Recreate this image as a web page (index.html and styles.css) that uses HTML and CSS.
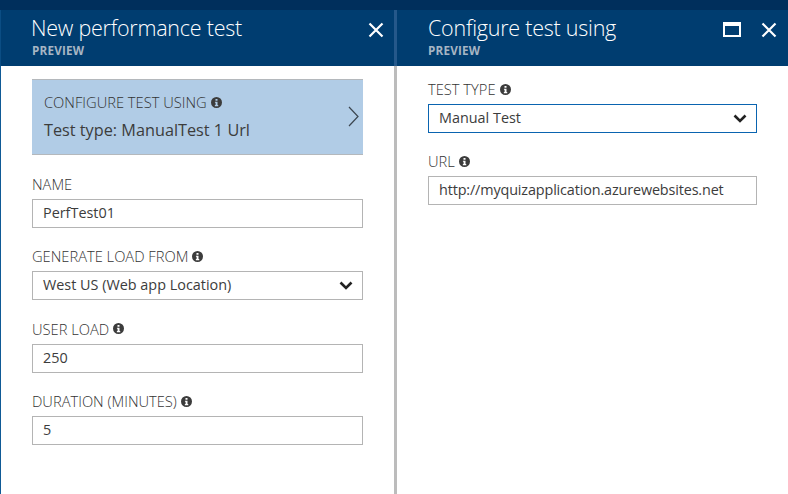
FILE: index.html
```html
<!DOCTYPE html>
<html lang="en">
<head>
<meta charset="utf-8">
<title>New performance test</title>
<link rel="stylesheet" href="styles.css">
</head>
<body>
<div class="topbar"></div>
<main class="blades">
  <section class="blade blade-left">
    <header class="blade-head">
      <div class="titles">
        <h1>New performance test</h1>
        <div class="sub">PREVIEW</div>
      </div>
      <div class="actions">
        <svg class="ico-close" width="16" height="16" viewBox="0 0 16 16"><path d="M1.5 1.5L14.5 14.5M14.5 1.5L1.5 14.5" fill="none" stroke="#fff" stroke-width="2.2"/></svg>
      </div>
    </header>
    <div class="blade-body">
      <div class="selector">
        <div class="selector-text">
          <div class="label">CONFIGURE TEST USING <svg class="info" viewBox="0 0 12 12"><use href="#i"/></svg></div>
          <div class="selector-value">Test type: ManualTest 1 Url</div>
        </div>
        <svg class="chev" width="11" height="21" viewBox="0 0 11 21"><path d="M1 1L10 10.5L1 20" fill="none" stroke="#3c4650" stroke-width="1.2"/></svg>
      </div>
      <div class="field">
        <div class="label">NAME</div>
        <div class="box">PerfTest01</div>
      </div>
      <div class="field">
        <div class="label">GENERATE LOAD FROM <svg class="info" viewBox="0 0 12 12"><use href="#i"/></svg></div>
        <div class="box box-select"><span>West US (Web app Location)</span><svg class="caret" width="14" height="9" viewBox="0 0 14 9"><path d="M1.5 1.5L7 7L12.5 1.5" fill="none" stroke="#222" stroke-width="2.6"/></svg></div>
      </div>
      <div class="field">
        <div class="label">USER LOAD <svg class="info" viewBox="0 0 12 12"><use href="#i"/></svg></div>
        <div class="box">250</div>
      </div>
      <div class="field">
        <div class="label">DURATION (MINUTES) <svg class="info" viewBox="0 0 12 12"><use href="#i"/></svg></div>
        <div class="box">5</div>
      </div>
    </div>
  </section>
  <section class="blade blade-right">
    <header class="blade-head">
      <div class="titles">
        <h1>Configure test using</h1>
        <div class="sub">PREVIEW</div>
      </div>
      <div class="actions">
        <svg class="ico-max" width="18" height="15" viewBox="0 0 18 15"><path d="M0 0H18V15H0ZM2 4V13H16V4Z" fill="#fff" fill-rule="evenodd"/></svg>
        <svg class="ico-close" width="16" height="16" viewBox="0 0 16 16"><path d="M1.5 1.5L14.5 14.5M14.5 1.5L1.5 14.5" fill="none" stroke="#fff" stroke-width="2.2"/></svg>
      </div>
    </header>
    <div class="blade-body">
      <div class="field">
        <div class="label">TEST TYPE <svg class="info" viewBox="0 0 12 12"><use href="#i"/></svg></div>
        <div class="box box-select box-focus"><span>Manual Test</span><svg class="caret" width="14" height="9" viewBox="0 0 14 9"><path d="M1.5 1.5L7 7L12.5 1.5" fill="none" stroke="#222" stroke-width="2.6"/></svg></div>
      </div>
      <div class="field">
        <div class="label">URL <svg class="info" viewBox="0 0 12 12"><use href="#i"/></svg></div>
        <div class="box box-url">http://myquizapplication.azurewebsites.net</div>
      </div>
    </div>
  </section>
</main>
<svg class="defs" width="0" height="0">
  <symbol id="i" viewBox="0 0 12 12">
    <path fill="#3c3c3c" fill-rule="evenodd" d="M6 0a6 6 0 1 0 0 12a6 6 0 0 0 0-12ZM4.9 2.2H7.1V4.2H4.9ZM4.3 5.2H7.1V8.8H7.9V10H4.2V8.8H5V6.4H4.3Z"/>
  </symbol>
</svg>
</body>
</html>
```
FILE: styles.css
```css
* { box-sizing: border-box; }
html, body { margin: 0; padding: 0; height: 100%; }
body {
  width: 788px;
  height: 494px;
  overflow: hidden;
  background: #fff;
  font-family: "Open Sans", "Noto Sans", sans-serif;
  color: #3c3c3c;
  display: flex;
  flex-direction: column;
}
.topbar { height: 10px; background: #002f5c; flex: none; }
.blades { flex: 1; display: flex; min-height: 0; }
.blade { display: flex; flex-direction: column; }
.blade-left { width: 397px; flex: none; }
.blade-right { flex: 1; }
.blade-head {
  height: 56px;
  background: #003d70;
  display: flex;
  justify-content: space-between;
  flex: none;
}
.blade-left .blade-head {
  padding: 0 10px 0 31px;
  border-left: 1px solid #0b4d83;
  border-right: 3px solid #25588a;
}
.blade-right .blade-head { padding: 0 11px 0 31px; }
h1 {
  margin: 3px 0 0;
  font-size: 21.5px;
  letter-spacing: -0.24px;
  line-height: 30px;
  font-weight: 300;
  color: #fff;
  white-space: nowrap;
}
.blade-left h1 { margin-left: -1px; }
.sub {
  font-size: 11.7px;
  letter-spacing: 0.2px;
  line-height: 14px;
  font-weight: 700;
  color: #a6b5c4;
}
.actions { display: flex; align-items: flex-start; gap: 20px; padding-top: 12px; }
.blade-body { padding: 13px 31px 0; flex: 1; }
.blade-left .blade-body { border-left: 1px solid #0f5a96; border-right: 3px solid #bcbcbc; }
.blade-right .blade-body { padding: 14px 31px 0; }
.selector {
  height: 76px;
  background: #b1cce6;
  border-top: 1px solid #b4b8bc;
  border-bottom: 1px solid #b4b8bc;
  display: flex;
  align-items: center;
  justify-content: space-between;
  padding: 0 4px 0 12px;
  margin-bottom: 20px;
}
.selector-text { margin-top: -1px; }
.selector-text .label { margin-bottom: 9px; }
.selector-value { font-size: 16.25px; line-height: 20px; color: #3c3c3c; }
.chev { margin-top: -2px; }
.label {
  font-size: 14.7px;
  line-height: 18px;
  font-weight: 300;
  color: #333;
  display: flex;
  align-items: center;
  gap: 4px;
  white-space: nowrap;
}
.info { width: 11px; height: 11px; flex: none; }
.field { margin-bottom: 19.4px; }
.field .label { margin-bottom: 6px; }
.box {
  height: 29px;
  border: 1px solid #b4b4b4;
  padding: 0 10px;
  font-size: 14.4px;
  line-height: 26px;
  color: #3c3c3c;
  white-space: nowrap;
  background: #fff;
}
.box-url { letter-spacing: -0.14px; }
.box-select { display: flex; justify-content: space-between; align-items: flex-start; padding-right: 9px; }
.caret { margin-top: 9px; }
.box-focus { border-color: #0a64b0; }
.defs { position: absolute; }
```
